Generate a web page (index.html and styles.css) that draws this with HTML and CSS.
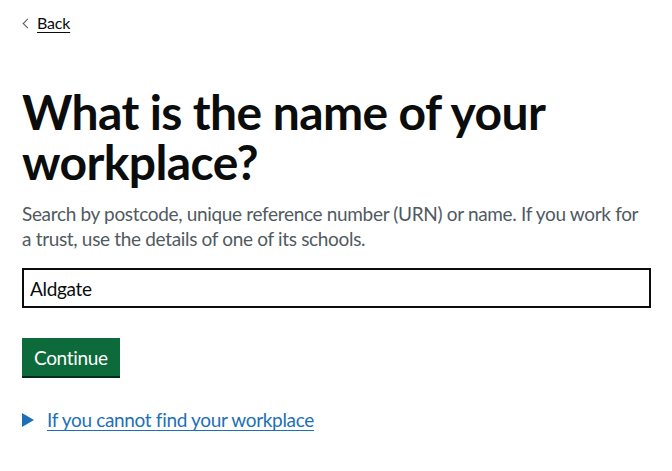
FILE: index.html
```html
<!DOCTYPE html>
<html lang="en">
<head>
<meta charset="utf-8">
<title>What is the name of your workplace?</title>
<link rel="stylesheet" href="styles.css">
</head>
<body>
<div class="page">
  <a class="back-link" href="#"><span class="back-chevron"></span><span class="back-text">Back</span></a>
  <main class="main">
    <h1 class="heading"><label for="workplace">What is the name of your workplace?</label></h1>
    <div class="hint">Search by postcode, unique reference number (URN) or name. If you work for a trust, use the details of one of its schools.</div>
    <input class="input" id="workplace" type="text" value="Aldgate">
    <div class="actions"><button class="button" type="submit">Continue</button></div>
    <details class="details">
      <summary class="summary"><span class="summary-arrow"></span><span class="summary-text">If you cannot find your workplace</span></summary>
    </details>
  </main>
</div>
</body>
</html>
```
FILE: styles.css
```css
html, body {
  margin: 0;
  padding: 0;
  background: #ffffff;
}
body {
  font-family: "Lato", "Liberation Sans", sans-serif;
  color: #0b0c0c;
  letter-spacing: -0.33px;
}
.page {
  padding: 0 21px 0 22px;
}
.back-link {
  display: inline-flex;
  align-items: center;
  gap: 6px;
  margin-top: 13px;
  font-size: 16px;
  line-height: 20px;
  color: #0b0c0c;
  text-decoration: none;
  letter-spacing: -0.2px;
}
.back-chevron {
  display: inline-block;
  width: 6px;
  height: 6px;
  border-left: 1px solid #505a5f;
  border-bottom: 1px solid #505a5f;
  transform: rotate(45deg);
  margin-left: 2px;
  margin-top: 1px;
}
.back-text {
  text-decoration: underline;
  text-underline-offset: 3px;
  text-decoration-thickness: 1px;
}
.main {
  display: flex;
  flex-direction: column;
  padding-top: 54px;
}
.heading {
  margin: 0 0 14px;
  font-size: 48px;
  line-height: 50px;
  font-weight: 700;
  letter-spacing: -0.6px;
}
.hint {
  font-size: 19px;
  line-height: 25px;
  color: #505a5f;
  margin-bottom: 17px;
}
.input {
  box-sizing: border-box;
  height: 40px;
  width: 100%;
  margin: 0;
  padding: 5px 6px;
  border: 2px solid #0b0c0c;
  border-radius: 0;
  font-family: inherit;
  font-size: 19px;
  letter-spacing: -0.33px;
  color: #0b0c0c;
  outline: none;
}
.actions {
  margin-top: 30px;
}
.button {
  box-sizing: border-box;
  height: 38px;
  padding: 0 12px;
  border: 0;
  border-radius: 0;
  background: #0d6a3a;
  box-shadow: 0 2px 0 #002d18;
  color: #ffffff;
  font-family: inherit;
  font-size: 19px;
  line-height: 19px;
  letter-spacing: -0.33px;
  cursor: pointer;
}
.details {
  margin-top: 31px;
}
.summary {
  display: flex;
  align-items: center;
  gap: 13px;
  list-style: none;
  font-size: 19px;
  line-height: 25px;
  color: #1d70b8;
  cursor: pointer;
}
.summary::-webkit-details-marker {
  display: none;
}
.summary-arrow {
  width: 0;
  height: 0;
  border-style: solid;
  border-width: 7px 0 7px 12px;
  border-color: transparent transparent transparent #1d70b8;
}
.summary-text {
  text-decoration: underline;
  text-underline-offset: 3px;
  text-decoration-thickness: 1px;
}
```
